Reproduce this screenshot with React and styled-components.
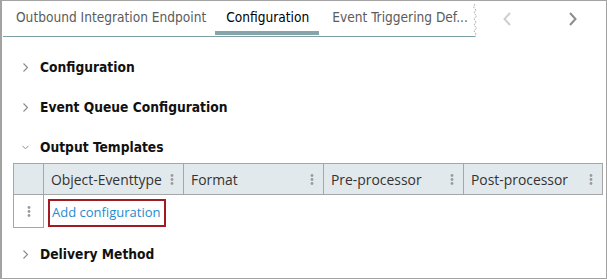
import React from 'react';
import styled, { createGlobalStyle } from 'styled-components';

const Global = createGlobalStyle`
    html, body {
        margin: 0;
        padding: 0;
        background: #fff;
    }
`
const Frame = styled.div`
    width: 607px;
    height: 279px;
    box-sizing: border-box;
    border: 1px solid #a3a3a3;
    border-left-width: 2px;
    overflow: hidden;
    font-family: "DejaVu Sans Condensed", "DejaVu Sans", sans-serif;
    color: #111;
`
const TabBar = styled.div`
    display: flex;
    height: 36px;
`
const TabStrip = styled.div`
    position: relative;
    display: flex;
    align-items: stretch;
    width: 472px;
    margin-left: 1px;
    border-bottom: 1px solid #7d9fa6;
    padding-left: 3px;
    box-sizing: border-box;
`
const Tab = styled.div`
    display: flex;
    align-items: center;
    padding: 2px ${p => p.$right}px 0 ${p => p.$left}px;
    margin-bottom: 1px;
    font-size: 13.6px;
    color: ${p => p.$active ? '#000' : '#5b5b5b'};
    border-bottom: 4px solid ${p => p.$active ? '#86a5ab' : 'transparent'};
    white-space: nowrap;
`
const Torn = styled.svg`
    position: absolute;
    right: -3px;
    top: 3px;
`
const Nav = styled.div`
    flex: 1;
    display: flex;
    align-items: center;
    padding-left: 27px;
    gap: 56px;
`
const NavArrow = styled.svg`
    display: block;
`
const Content = styled.div`
    padding: 10px 0 0 11px;
`
const SectionHeader = styled.div`
    display: flex;
    align-items: center;
    box-sizing: border-box;
    height: ${p => p.$open ? 36 : 40}px;
    padding-top: ${p => p.$open ? 4 : 0}px;
    padding-left: 9px;
    gap: 11px;
    font-size: 13.7px;
    font-weight: bold;
`
const Chevron = styled.svg`
    display: block;
    width: 7px;
`
const Table = styled.div`
    width: 590px;
    margin-bottom: 6px;
    font-family: "Open Sans", sans-serif;
`
const HeadRow = styled.div`
    display: grid;
    grid-template-columns: 29px 140px 140px 140px 139px;
    box-sizing: border-box;
    height: 32px;
    border: 1px solid #a6a6a6;
    background: #e2e9ec;
    font-size: 13.9px;
`
const HeadCell = styled.div`
    display: flex;
    align-items: center;
    justify-content: space-between;
    padding: 0 9px 0 7px;
    border-left: ${p => p.$first ? 'none' : '1px solid #a6a6a6'};
    color: #333;
`
const BodyRow = styled.div`
    display: flex;
    height: 33px;
    font-size: 13px;
`
const HandleCell = styled.div`
    width: 29px;
    display: flex;
    align-items: center;
    justify-content: center;
    border: 1px solid #a6a6a6;
    border-top: none;
`
const LinkCell = styled.div`
    padding: 4px 0 0 4px;
`
const AddLink = styled.a`
    display: inline-flex;
    align-items: center;
    box-sizing: border-box;
    height: 28px;
    padding: 0 4px 2px 2px;
    border: 2px solid #a11b22;
    color: #1f8bd0;
    text-decoration: none;
    cursor: pointer;
`

const Kebab = () => (
    <svg width="4" height="11" viewBox="0 0 4 11">
        <circle cx="2" cy="1.5" r="1.4" fill="#9a9a9a" />
        <circle cx="2" cy="5.5" r="1.4" fill="#9a9a9a" />
        <circle cx="2" cy="9.5" r="1.4" fill="#9a9a9a" />
    </svg>
);

const Arrow = ({ open }) => (
    open ? (
        <Chevron height="7" viewBox="0 0 8 7">
            <path d="M0.5 1.5 L4 5 L7.5 1.5" fill="none" stroke="#8a8a8a" strokeWidth="1.1" />
        </Chevron>
    ) : (
        <Chevron height="9" viewBox="0 0 7 9">
            <path d="M1.5 0.5 L5.5 4.5 L1.5 8.5" fill="none" stroke="#8a8a8a" strokeWidth="1.1" />
        </Chevron>
    )
);

const columns = ['Object-Eventtype', 'Format', 'Pre-processor', 'Post-processor'];

const sections = [
    { title: 'Configuration' },
    { title: 'Event Queue Configuration' },
];

const App = () => {
    return (
        <Frame>
            <Global />
            <TabBar>
                <TabStrip>
                    <Tab $left={10} $right={9}>Outbound Integration Endpoint</Tab>
                    <Tab $left={11} $right={10} $active>Configuration</Tab>
                    <Tab $left={13} $right={4}>Event Triggering Def...</Tab>
                    <Torn width="6" height="33" viewBox="0 0 6 33">
                        <path d="M3 0 L1.5 3 L4 6 L2 9 L4.5 12 L2 15 L4 18 L2 21 L4.5 24 L2 27 L4 30 L3 33"
                            fill="none" stroke="#9a9a9a" strokeWidth="0.8" strokeDasharray="2 1" />
                    </Torn>
                </TabStrip>
                <Nav>
                    <NavArrow width="10" height="14" viewBox="0 0 10 14">
                        <path d="M8 1 L2.5 7 L8 13" fill="none" stroke="#cfcfcf" strokeWidth="2" />
                    </NavArrow>
                    <NavArrow width="10" height="14" viewBox="0 0 10 14">
                        <path d="M2 1 L7.5 7 L2 13" fill="none" stroke="#8c8c8c" strokeWidth="2" />
                    </NavArrow>
                </Nav>
            </TabBar>
            <Content>
                {sections.map(s => (
                    <SectionHeader key={s.title}>
                        <Arrow />
                        {s.title}
                    </SectionHeader>
                ))}
                <SectionHeader $open>
                    <Arrow open />
                    Output Templates
                </SectionHeader>
                <Table>
                    <HeadRow>
                        <HeadCell $first />
                        {columns.map(c => (
                            <HeadCell key={c}>
                                {c}
                                <Kebab />
                            </HeadCell>
                        ))}
                    </HeadRow>
                    <BodyRow>
                        <HandleCell><Kebab /></HandleCell>
                        <LinkCell>
                            <AddLink>Add configuration</AddLink>
                        </LinkCell>
                    </BodyRow>
                </Table>
                <SectionHeader>
                    <Arrow />
                    Delivery Method
                </SectionHeader>
            </Content>
        </Frame>
    );
};

export default App;
